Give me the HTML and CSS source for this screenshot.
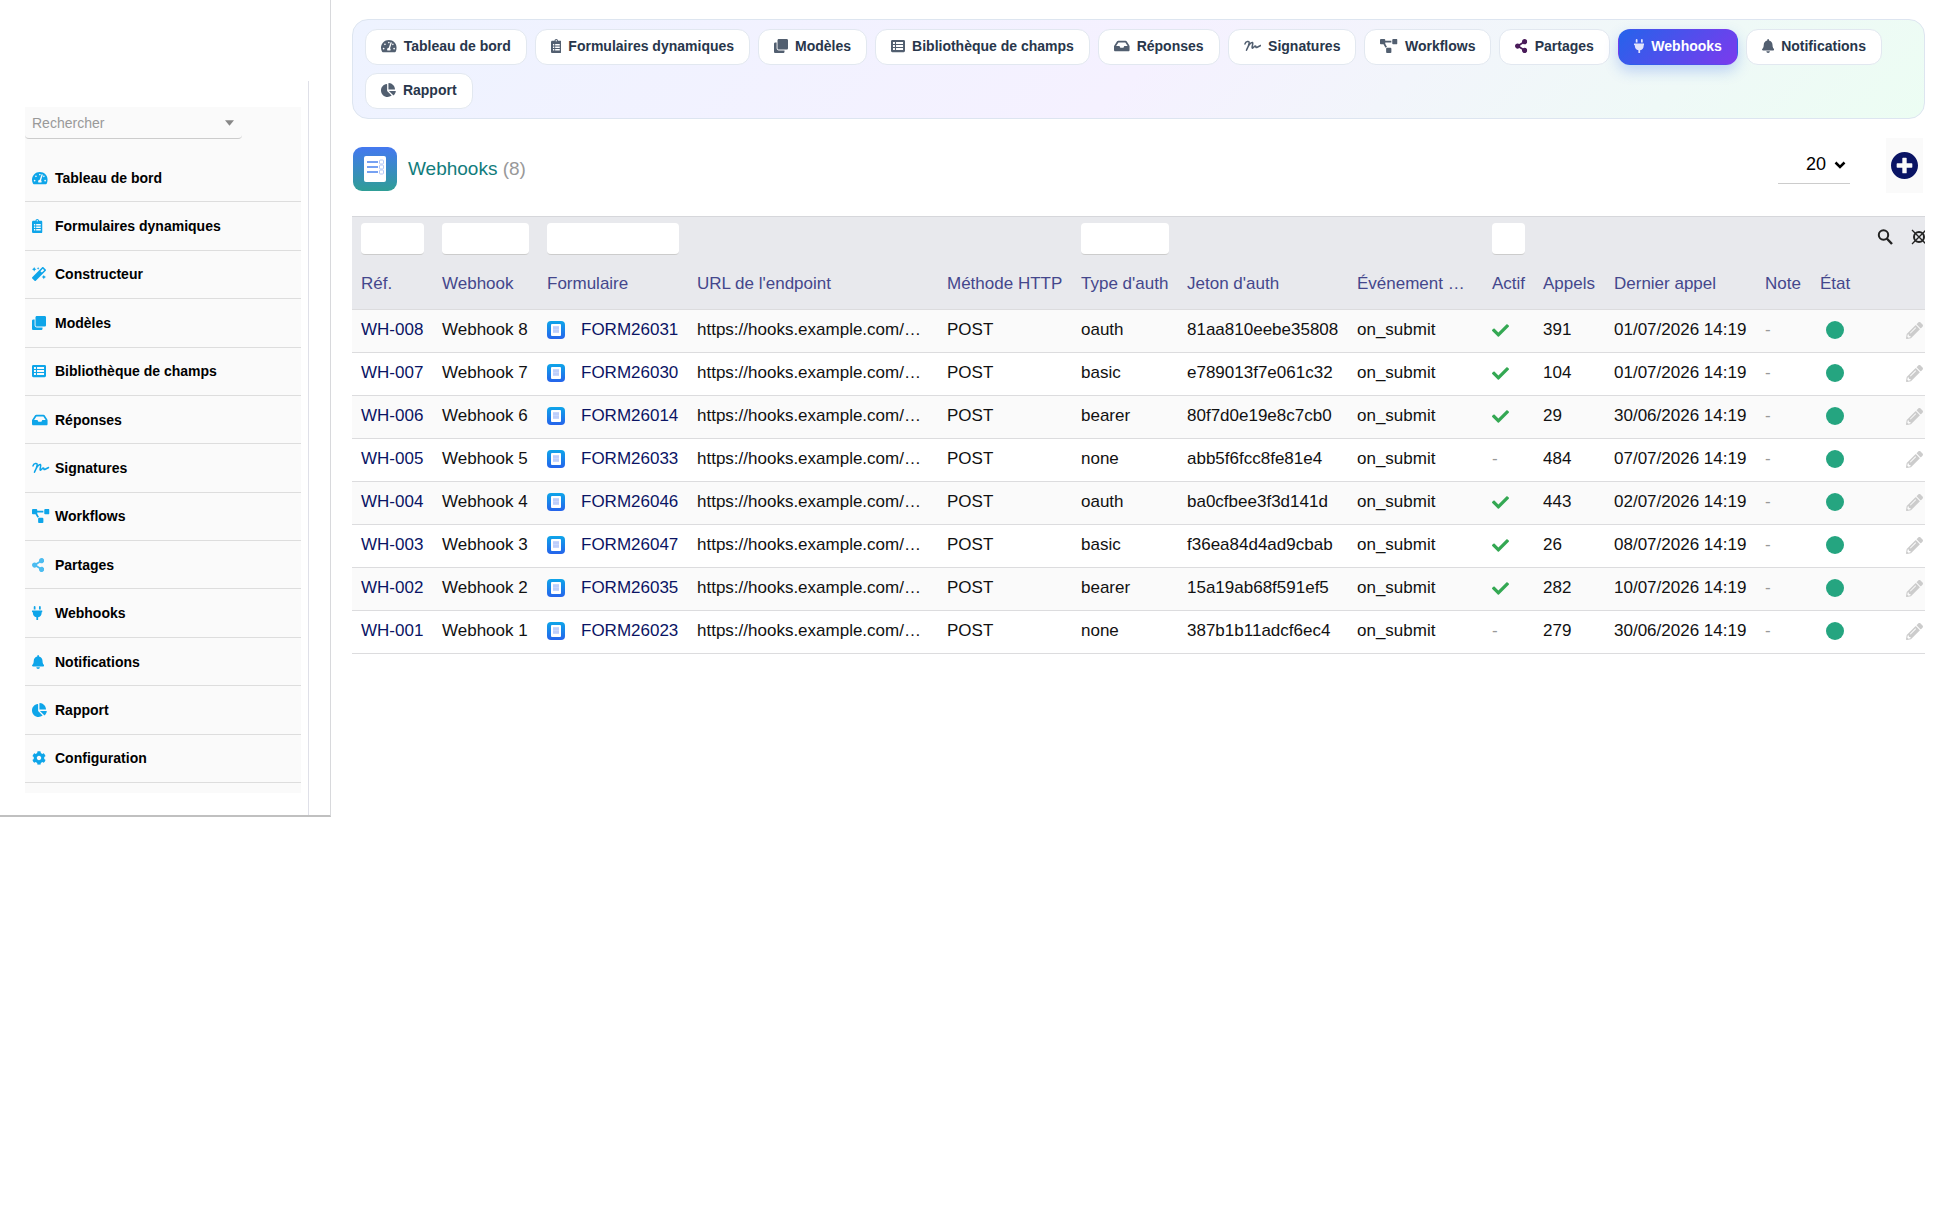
FILE: index.html
```html
<!DOCTYPE html>
<html lang="fr">
<head>
    <meta charset="UTF-8">
    <meta name="viewport" content="width=device-width, initial-scale=1.0">
    <title>Webhooks</title>
    <link rel="stylesheet" href="styles.css">
</head>
<body>
    <!-- Icones -->
    <svg class="sprite" aria-hidden="true">
        <symbol id="i-dashboard" viewBox="0 0 576 512"><path d="M288 32C128.94 32 0 160.94 0 320c0 52.8 14.25 102.26 39.06 144.8 5.61 9.62 16.3 15.2 27.44 15.2h443c11.14 0 21.83-5.58 27.44-15.2C561.75 422.26 576 372.8 576 320c0-159.06-128.94-288-288-288zm0 64c14.71 0 26.58 10.13 30.32 23.65-1.11 2.26-2.64 4.23-3.45 6.67l-9.22 27.67c-5.13 3.49-10.97 6.01-17.64 6.01-17.67 0-32-14.33-32-32S270.33 96 288 96zM96 384c-17.67 0-32-14.33-32-32s14.33-32 32-32 32 14.33 32 32-14.33 32-32 32zm48-160c-17.67 0-32-14.33-32-32s14.33-32 32-32 32 14.33 32 32-14.33 32-32 32zm246.77-72.41l-61.33 184C343.13 347.33 352 364.54 352 384c0 11.72-3.38 22.55-8.88 32H232.88c-5.5-9.45-8.88-20.28-8.88-32 0-33.94 26.5-61.43 59.9-63.59l61.34-184.01c4.17-12.56 17.73-19.45 30.36-15.17 12.57 4.19 19.35 17.79 15.17 30.36zm14.66 57.2l15.52-46.55c3.47-1.29 7.13-2.23 11.05-2.23 17.67 0 32 14.33 32 32s-14.33 32-32 32c-11.38-.01-20.89-6.28-26.57-15.22zM480 384c-17.67 0-32-14.33-32-32s14.33-32 32-32 32 14.33 32 32-14.33 32-32 32z"/></symbol>
        <symbol id="i-form" viewBox="0 0 384 512"><path fill-rule="evenodd" d="M336 64h-80c0-35.3-28.7-64-64-64s-64 28.7-64 64H48C21.5 64 0 85.5 0 112v352c0 26.5 21.5 48 48 48h288c26.5 0 48-21.5 48-48V112c0-26.5-21.5-48-48-48zM192 40a24 24 0 1 1 0 48 24 24 0 0 1 0-48zM72 184h48v52H72zM152 184h168v52H152zM72 276h48v52H72zM152 276h168v52H152zM72 368h48v52H72zM152 368h168v52H152z"/></symbol>
        <symbol id="i-magic" viewBox="0 0 512 512"><path d="M224 96l16-32 32-16-32-16-16-32-16 32-32 16 32 16 16 32zM80 160l26.66-53.33L160 80l-53.34-26.67L80 0 53.34 53.33 0 80l53.34 26.67L80 160zm352 128l-26.66 53.33L352 368l53.34 26.67L432 448l26.66-53.33L512 368l-53.34-26.67L432 288zm70.62-193.77L417.77 9.38C411.53 3.12 403.34 0 395.15 0c-8.19 0-16.38 3.12-22.63 9.38L9.38 372.52c-12.5 12.5-12.5 32.76 0 45.25l84.85 84.85c6.25 6.25 14.44 9.37 22.62 9.37 8.19 0 16.38-3.12 22.63-9.37l363.14-363.15c12.5-12.48 12.5-32.75 0-45.24zM359.45 203.46l-50.91-50.91 86.6-86.6 50.91 50.91-86.6 86.6z"/></symbol>
        <symbol id="i-clone" viewBox="0 0 512 512"><path d="M464 0c26.51 0 48 21.49 48 48v288c0 26.51-21.49 48-48 48H176c-26.51 0-48-21.49-48-48V48c0-26.51 21.49-48 48-48h288M176 416c-44.112 0-80-35.888-80-80V128H48c-26.51 0-48 21.49-48 48v288c0 26.51 21.49 48 48 48h288c26.51 0 48-21.49 48-48v-48H176z"/></symbol>
        <symbol id="i-list" viewBox="0 0 512 512"><path fill-rule="evenodd" d="M464 480H48c-26.51 0-48-21.49-48-48V80c0-26.51 21.49-48 48-48h416c26.51 0 48 21.49 48 48v352c0 26.51-21.49 48-48 48zM72 112h72v72H72zM184 112h256v72H184zM72 222h72v72H72zM184 222h256v72H184zM72 332h72v72H72zM184 332h256v72H184z"/></symbol>
        <symbol id="i-inbox" viewBox="0 0 576 512"><path d="M567.938 243.908L462.25 85.374A48.003 48.003 0 0 0 422.311 64H153.689a48 48 0 0 0-39.938 21.374L8.062 243.908A47.994 47.994 0 0 0 0 270.533V400c0 26.51 21.49 48 48 48h480c26.51 0 48-21.49 48-48V270.533a47.994 47.994 0 0 0-8.062-26.625zM162.252 128h251.497l85.333 128H376l-32 64H232l-32-64H76.918l85.334-128z"/></symbol>
        <symbol id="i-signature" viewBox="0 0 640 512"><path fill="none" stroke="currentColor" stroke-width="56" stroke-linecap="round" stroke-linejoin="round" d="M36 180C60 80 195 50 190 150C180 220 130 330 90 410C150 270 250 120 310 130C355 150 260 320 305 335C350 340 380 240 425 260C450 280 415 325 465 312L610 236"/></symbol>
        <symbol id="i-workflow" viewBox="0 0 640 512"><path d="M384 320H256c-17.67 0-32 14.33-32 32v128c0 17.67 14.33 32 32 32h128c17.67 0 32-14.33 32-32V352c0-17.67-14.33-32-32-32zM192 32c0-17.67-14.33-32-32-32H32C14.33 0 0 14.33 0 32v128c0 17.67 14.33 32 32 32h95.72l73.16 128.04C211.98 300.98 232.4 288 256 288h.28L192 175.51V128h224V64H192V32zM608 0H480c-17.67 0-32 14.33-32 32v128c0 17.67 14.33 32 32 32h128c17.67 0 32-14.33 32-32V32c0-17.67-14.33-32-32-32z"/></symbol>
        <symbol id="i-share" viewBox="0 0 448 512"><path d="M352 320c-22.608 0-43.387 7.819-59.79 20.895l-102.486-64.054a96.551 96.551 0 0 0 0-41.683l102.486-64.054C308.613 184.181 329.392 192 352 192c53.019 0 96-42.981 96-96S405.019 0 352 0s-96 42.981-96 96c0 7.158.79 14.13 2.276 20.841L155.79 180.895C139.387 167.819 118.608 160 96 160c-53.019 0-96 42.981-96 96s42.981 96 96 96c22.608 0 43.387-7.819 59.79-20.895l102.486 64.054A96.301 96.301 0 0 0 256 416c0 53.019 42.981 96 96 96s96-42.981 96-96-42.981-96-96-96z"/></symbol>
        <symbol id="i-plug" viewBox="0 0 384 512"><path d="M320 32a32 32 0 0 0-64 0v96h64zm48 128H16a16 16 0 0 0-16 16v32a16 16 0 0 0 16 16h16v32a160.07 160.07 0 0 0 128 156.8V512h64v-99.2A160.07 160.07 0 0 0 352 256v-32h16a16 16 0 0 0 16-16v-32a16 16 0 0 0-16-16zM128 32a32 32 0 0 0-64 0v96h64z"/></symbol>
        <symbol id="i-bell" viewBox="0 0 448 512"><path d="M224 512c35.32 0 63.97-28.65 63.97-64H160.03c0 35.35 28.65 64 63.97 64zm215.39-149.71c-19.32-20.76-55.47-51.99-55.47-154.29 0-77.7-54.48-139.9-127.94-155.16V32c0-17.67-14.32-32-31.98-32s-31.98 14.33-31.98 32v20.84C118.56 68.1 64.08 130.3 64.08 208c0 102.3-36.15 133.53-55.47 154.29-6 6.45-8.66 14.16-8.61 21.71.11 16.4 12.98 32 32.1 32h383.8c19.12 0 32-15.6 32.1-32 .05-7.55-2.61-15.27-8.61-21.71z"/></symbol>
        <symbol id="i-pie" viewBox="0 0 544 512"><path d="M527.79 288H290.5l158.03 158.03c6.04 6.04 15.98 6.53 22.19.68 38.7-36.46 65.32-85.61 73.13-140.86 1.34-9.46-6.51-17.85-16.06-17.85zm-15.83-64.8C503.72 103.74 408.26 8.28 288.8.04 279.68-.59 272 7.1 272 16.24V240h223.77c9.14 0 16.82-7.68 16.19-16.8zM224 288V50.71c0-9.55-8.39-17.4-17.84-16.06C86.99 51.49-4.1 155.6.14 280.37 4.5 408.51 114.83 513.59 243.03 511.98c50.4-.63 96.97-16.87 135.26-44.03 7.9-5.6 8.42-17.23 1.57-24.08L224 288z"/></symbol>
        <symbol id="i-cog" viewBox="0 0 512 512"><path d="M487.4 315.7l-42.6-24.6c4.3-23.2 4.3-47 0-70.2l42.6-24.6c4.9-2.8 7.1-8.6 5.5-14-11.1-35.6-30-67.8-54.7-94.6-3.8-4.1-10-5.1-14.8-2.3L380.8 110c-17.9-15.4-38.5-27.3-60.8-35.1V25.8c0-5.6-3.9-10.5-9.4-11.7-36.7-8.2-74.3-7.8-109.2 0-5.5 1.2-9.4 6.1-9.4 11.7V75c-22.2 7.9-42.8 19.8-60.8 35.1L88.7 85.5c-4.9-2.8-11-1.9-14.8 2.3-24.7 26.7-43.6 58.9-54.7 94.6-1.7 5.4.6 11.2 5.5 14L67.3 221c-4.3 23.2-4.3 47 0 70.2l-42.6 24.6c-4.9 2.8-7.1 8.6-5.5 14 11.1 35.6 30 67.8 54.7 94.6 3.8 4.1 10 5.1 14.8 2.3l42.6-24.6c17.9 15.4 38.5 27.3 60.8 35.1v49.2c0 5.6 3.9 10.5 9.4 11.7 36.7 8.2 74.3 7.8 109.2 0 5.5-1.2 9.4-6.1 9.4-11.7v-49.2c22.2-7.9 42.8-19.8 60.8-35.1l42.6 24.6c4.9 2.8 11 1.9 14.8-2.3 24.7-26.7 43.6-58.9 54.7-94.6 1.5-5.5-.7-11.3-5.6-14.1zM256 336c-44.1 0-80-35.9-80-80s35.9-80 80-80 80 35.9 80 80-35.9 80-80 80z"/></symbol>
        <symbol id="i-check" viewBox="0 0 512 512"><path d="M173.898 439.404l-166.4-166.4c-9.997-9.997-9.997-26.206 0-36.204l36.203-36.204c9.997-9.998 26.207-9.998 36.204 0L192 312.69 432.095 72.596c9.997-9.997 26.207-9.997 36.204 0l36.203 36.204c9.997 9.997 9.997 26.206 0 36.204l-294.4 294.401c-9.998 9.997-26.207 9.997-36.204-.001z"/></symbol>
        <symbol id="i-pencil" viewBox="0 0 512 512"><path d="M497.9 142.1l-46.1 46.1c-4.7 4.7-12.3 4.7-17 0l-111-111c-4.7-4.7-4.7-12.3 0-17l46.1-46.1c18.7-18.7 49.1-18.7 67.9 0l60.1 60.1c18.8 18.7 18.8 49.1 0 67.9zM284.2 99.8L21.6 362.4.4 483.9c-2.9 16.4 11.4 30.6 27.8 27.8l121.5-21.3 262.6-262.6c4.7-4.7 4.7-12.3 0-17l-111-111c-4.8-4.7-12.4-4.7-17.1 0zM124.1 339.9c-5.5-5.5-5.5-14.3 0-19.8l154-154c5.5-5.5 14.3-5.5 19.8 0s5.5 14.3 0 19.8l-154 154c-5.5 5.5-14.3 5.5-19.8 0zM88 424h48v36.3l-64.5 11.3-31.1-31.1L51.7 376H88v48z"/></symbol>
        <symbol id="i-plus" viewBox="8 8 496 496"><path d="M256 8C119 8 8 119 8 256s111 248 248 248 248-111 248-248S393 8 256 8zm144 276c0 6.6-5.4 12-12 12h-92v92c0 6.6-5.4 12-12 12h-56c-6.6 0-12-5.4-12-12v-92h-92c-6.6 0-12-5.4-12-12v-56c0-6.6 5.4-12 12-12h92v-92c0-6.6 5.4-12 12-12h56c6.6 0 12 5.4 12 12v92h92c6.6 0 12 5.4 12 12v56z"/></symbol>
        <symbol id="i-doc" viewBox="0 0 18 18">
            <rect width="18" height="18" rx="4" fill="url(#blue)"/>
            <rect x="4" y="3" width="10" height="12" rx="1" fill="#fff"/>
            <path d="M6 5h6v7H6z" fill="#c9d7fc"/>
            <path d="M6 7h6M6 10h6" stroke="#a5b9f7" stroke-width=".6"/>
        </symbol>
        <linearGradient id="blue" x1="0" y1="0" x2="0" y2="1"><stop offset="0" stop-color="#0ea5e9"/><stop offset="1" stop-color="#2563eb"/></linearGradient>
        <linearGradient id="teal" x1="0" y1="0" x2="0" y2="1"><stop offset="0" stop-color="#4478f0"/><stop offset="1" stop-color="#2f9e96"/></linearGradient>
    </svg>

    <div class="page">
        <aside class="sidebar">
            <div class="sidebar-inner">
                <nav class="menu" aria-label="Menu">
                    <select class="search" aria-label="Rechercher">
                        <option>Rechercher</option>
                    </select>
                    <ul>
                        <li><a href="#"><svg class="icon" viewBox="0 0 576 512"><use href="#i-dashboard"/></svg><span>Tableau de bord</span></a></li>
                        <li><a href="#"><svg class="icon" viewBox="0 0 384 512"><use href="#i-form"/></svg><span>Formulaires dynamiques</span></a></li>
                        <li><a href="#"><svg class="icon" viewBox="0 0 512 512"><use href="#i-magic"/></svg><span>Constructeur</span></a></li>
                        <li><a href="#"><svg class="icon" viewBox="0 0 512 512"><use href="#i-clone"/></svg><span>Modèles</span></a></li>
                        <li><a href="#"><svg class="icon" viewBox="0 0 512 512"><use href="#i-list"/></svg><span>Bibliothèque de champs</span></a></li>
                        <li><a href="#"><svg class="icon" viewBox="0 0 576 512"><use href="#i-inbox"/></svg><span>Réponses</span></a></li>
                        <li><a href="#"><svg class="icon" viewBox="0 0 640 512"><use href="#i-signature"/></svg><span>Signatures</span></a></li>
                        <li><a href="#"><svg class="icon" viewBox="0 0 640 512"><use href="#i-workflow"/></svg><span>Workflows</span></a></li>
                        <li><a href="#"><svg class="icon light" viewBox="0 0 448 512"><use href="#i-share"/></svg><span>Partages</span></a></li>
                        <li><a href="#"><svg class="icon" viewBox="0 0 384 512"><use href="#i-plug"/></svg><span>Webhooks</span></a></li>
                        <li><a href="#"><svg class="icon" viewBox="0 0 448 512"><use href="#i-bell"/></svg><span>Notifications</span></a></li>
                        <li><a href="#"><svg class="icon" viewBox="0 0 544 512"><use href="#i-pie"/></svg><span>Rapport</span></a></li>
                        <li><a href="#"><svg class="icon" viewBox="0 0 512 512"><use href="#i-cog"/></svg><span>Configuration</span></a></li>
                    </ul>
                </nav>
            </div>
        </aside>

        <main class="content">
            <nav class="tabs" aria-label="Modules">
                <a class="tab" href="#"><svg class="icon" viewBox="0 0 576 512"><use href="#i-dashboard"/></svg>Tableau de bord</a>
                <a class="tab" href="#"><svg class="icon" viewBox="0 0 384 512"><use href="#i-form"/></svg>Formulaires dynamiques</a>
                <a class="tab" href="#"><svg class="icon" viewBox="0 0 512 512"><use href="#i-clone"/></svg>Modèles</a>
                <a class="tab" href="#"><svg class="icon" viewBox="0 0 512 512"><use href="#i-list"/></svg>Bibliothèque de champs</a>
                <a class="tab" href="#"><svg class="icon" viewBox="0 0 576 512"><use href="#i-inbox"/></svg>Réponses</a>
                <a class="tab" href="#"><svg class="icon" viewBox="0 0 640 512"><use href="#i-signature"/></svg>Signatures</a>
                <a class="tab" href="#"><svg class="icon" viewBox="0 0 640 512"><use href="#i-workflow"/></svg>Workflows</a>
                <a class="tab share" href="#"><svg class="icon" viewBox="0 0 448 512"><use href="#i-share"/></svg>Partages</a>
                <a class="tab active" href="#"><svg class="icon" viewBox="0 0 384 512"><use href="#i-plug"/></svg>Webhooks</a>
                <a class="tab" href="#"><svg class="icon" viewBox="0 0 448 512"><use href="#i-bell"/></svg>Notifications</a>
                <a class="tab" href="#"><svg class="icon" viewBox="0 0 544 512"><use href="#i-pie"/></svg>Rapport</a>
            </nav>

            <div class="title-bar">
                <div class="title">
                    <svg class="title-icon" viewBox="0 0 44 44" aria-hidden="true">
                        <rect width="44" height="44" rx="9" fill="url(#teal)"/>
                        <rect x="11" y="9" width="22" height="26" rx="2" fill="#fff"/>
                        <path d="M14 15h11M14 20h11M14 25h11" stroke="#4a83ee" stroke-width="1.5"/>
                        <g fill="none" stroke="#b4c8f8" stroke-width="1"><rect x="26.5" y="13" width="4" height="4" rx="1"/><rect x="26.5" y="18" width="4" height="4" rx="1"/><rect x="26.5" y="23" width="4" height="4" rx="1"/></g>
                    </svg>
                    <h1>Webhooks <span>(8)</span></h1>
                </div>
                <select class="limit" aria-label="Nombre de lignes">
                    <option>20</option>
                </select>
                <a class="add" href="#" aria-label="Nouveau webhook"><svg viewBox="0 0 496 496"><use href="#i-plus"/></svg></a>
            </div>

            <table class="list">
                <colgroup>
                    <col class="c-ref"><col class="c-name"><col class="c-form"><col><col class="c-method">
                    <col class="c-type"><col class="c-token"><col class="c-event"><col class="c-active"><col class="c-calls">
                    <col class="c-date"><col class="c-note"><col class="c-state"><col class="c-actions">
                </colgroup>
                <thead>
                    <tr class="filters">
                        <td><input type="text" aria-label="Filtrer par réf."></td>
                        <td><input type="text" aria-label="Filtrer par webhook"></td>
                        <td><input type="text" aria-label="Filtrer par formulaire"></td>
                        <td></td>
                        <td></td>
                        <td><input type="text" aria-label="Filtrer par type d'auth"></td>
                        <td></td>
                        <td></td>
                        <td><input type="text" aria-label="Filtrer par actif"></td>
                        <td></td>
                        <td></td>
                        <td></td>
                        <td></td>
                        <td class="tools">
                            <div>
                                <button type="button" aria-label="Rechercher"><svg viewBox="0 0 16 16"><circle cx="6.5" cy="6" r="4.7" fill="none" stroke="#222" stroke-width="2"/><path d="M9.8 9.5L15 15" stroke="#222" stroke-width="2.4"/></svg></button>
                                <button type="button" aria-label="Effacer les filtres"><svg viewBox="0 0 16 16"><circle cx="8" cy="8" r="5" fill="none" stroke="#222" stroke-width="2"/><path d="M1 1l14 14M15 1L1 15" stroke="#222" stroke-width="1.3"/></svg></button>
                            </div>
                        </td>
                    </tr>
                    <tr class="titles">
                        <th>Réf.</th>
                        <th>Webhook</th>
                        <th>Formulaire</th>
                        <th>URL de l'endpoint</th>
                        <th>Méthode HTTP</th>
                        <th>Type d'auth</th>
                        <th>Jeton d'auth</th>
                        <th>Événement …</th>
                        <th>Actif</th>
                        <th>Appels</th>
                        <th>Dernier appel</th>
                        <th>Note</th>
                        <th class="state">État</th>
                        <th></th>
                    </tr>
                </thead>
                <tbody>
                    <tr>
                        <td><a href="#">WH-008</a></td><td>Webhook 8</td>
                        <td><a class="form" href="#"><svg viewBox="0 0 18 18"><use href="#i-doc"/></svg>FORM26031</a></td>
                        <td>https://hooks.example.com/…</td><td>POST</td><td>oauth</td><td>81aa810eebe35808</td><td>on_submit</td>
                        <td><svg class="check" viewBox="0 0 512 512"><use href="#i-check"/></svg></td>
                        <td>391</td><td>01/07/2026 14:19</td><td class="muted">-</td>
                        <td class="state"><span class="dot"></span></td>
                        <td class="edit"><a href="#" aria-label="Modifier"><svg viewBox="0 0 512 512"><use href="#i-pencil"/></svg></a></td>
                    </tr>
                    <tr>
                        <td><a href="#">WH-007</a></td><td>Webhook 7</td>
                        <td><a class="form" href="#"><svg viewBox="0 0 18 18"><use href="#i-doc"/></svg>FORM26030</a></td>
                        <td>https://hooks.example.com/…</td><td>POST</td><td>basic</td><td>e789013f7e061c32</td><td>on_submit</td>
                        <td><svg class="check" viewBox="0 0 512 512"><use href="#i-check"/></svg></td>
                        <td>104</td><td>01/07/2026 14:19</td><td class="muted">-</td>
                        <td class="state"><span class="dot"></span></td>
                        <td class="edit"><a href="#" aria-label="Modifier"><svg viewBox="0 0 512 512"><use href="#i-pencil"/></svg></a></td>
                    </tr>
                    <tr>
                        <td><a href="#">WH-006</a></td><td>Webhook 6</td>
                        <td><a class="form" href="#"><svg viewBox="0 0 18 18"><use href="#i-doc"/></svg>FORM26014</a></td>
                        <td>https://hooks.example.com/…</td><td>POST</td><td>bearer</td><td>80f7d0e19e8c7cb0</td><td>on_submit</td>
                        <td><svg class="check" viewBox="0 0 512 512"><use href="#i-check"/></svg></td>
                        <td>29</td><td>30/06/2026 14:19</td><td class="muted">-</td>
                        <td class="state"><span class="dot"></span></td>
                        <td class="edit"><a href="#" aria-label="Modifier"><svg viewBox="0 0 512 512"><use href="#i-pencil"/></svg></a></td>
                    </tr>
                    <tr>
                        <td><a href="#">WH-005</a></td><td>Webhook 5</td>
                        <td><a class="form" href="#"><svg viewBox="0 0 18 18"><use href="#i-doc"/></svg>FORM26033</a></td>
                        <td>https://hooks.example.com/…</td><td>POST</td><td>none</td><td>abb5f6fcc8fe81e4</td><td>on_submit</td>
                        <td class="muted">-</td>
                        <td>484</td><td>07/07/2026 14:19</td><td class="muted">-</td>
                        <td class="state"><span class="dot"></span></td>
                        <td class="edit"><a href="#" aria-label="Modifier"><svg viewBox="0 0 512 512"><use href="#i-pencil"/></svg></a></td>
                    </tr>
                    <tr>
                        <td><a href="#">WH-004</a></td><td>Webhook 4</td>
                        <td><a class="form" href="#"><svg viewBox="0 0 18 18"><use href="#i-doc"/></svg>FORM26046</a></td>
                        <td>https://hooks.example.com/…</td><td>POST</td><td>oauth</td><td>ba0cfbee3f3d141d</td><td>on_submit</td>
                        <td><svg class="check" viewBox="0 0 512 512"><use href="#i-check"/></svg></td>
                        <td>443</td><td>02/07/2026 14:19</td><td class="muted">-</td>
                        <td class="state"><span class="dot"></span></td>
                        <td class="edit"><a href="#" aria-label="Modifier"><svg viewBox="0 0 512 512"><use href="#i-pencil"/></svg></a></td>
                    </tr>
                    <tr>
                        <td><a href="#">WH-003</a></td><td>Webhook 3</td>
                        <td><a class="form" href="#"><svg viewBox="0 0 18 18"><use href="#i-doc"/></svg>FORM26047</a></td>
                        <td>https://hooks.example.com/…</td><td>POST</td><td>basic</td><td>f36ea84d4ad9cbab</td><td>on_submit</td>
                        <td><svg class="check" viewBox="0 0 512 512"><use href="#i-check"/></svg></td>
                        <td>26</td><td>08/07/2026 14:19</td><td class="muted">-</td>
                        <td class="state"><span class="dot"></span></td>
                        <td class="edit"><a href="#" aria-label="Modifier"><svg viewBox="0 0 512 512"><use href="#i-pencil"/></svg></a></td>
                    </tr>
                    <tr>
                        <td><a href="#">WH-002</a></td><td>Webhook 2</td>
                        <td><a class="form" href="#"><svg viewBox="0 0 18 18"><use href="#i-doc"/></svg>FORM26035</a></td>
                        <td>https://hooks.example.com/…</td><td>POST</td><td>bearer</td><td>15a19ab68f591ef5</td><td>on_submit</td>
                        <td><svg class="check" viewBox="0 0 512 512"><use href="#i-check"/></svg></td>
                        <td>282</td><td>10/07/2026 14:19</td><td class="muted">-</td>
                        <td class="state"><span class="dot"></span></td>
                        <td class="edit"><a href="#" aria-label="Modifier"><svg viewBox="0 0 512 512"><use href="#i-pencil"/></svg></a></td>
                    </tr>
                    <tr>
                        <td><a href="#">WH-001</a></td><td>Webhook 1</td>
                        <td><a class="form" href="#"><svg viewBox="0 0 18 18"><use href="#i-doc"/></svg>FORM26023</a></td>
                        <td>https://hooks.example.com/…</td><td>POST</td><td>none</td><td>387b1b11adcf6ec4</td><td>on_submit</td>
                        <td class="muted">-</td>
                        <td>279</td><td>30/06/2026 14:19</td><td class="muted">-</td>
                        <td class="state"><span class="dot"></span></td>
                        <td class="edit"><a href="#" aria-label="Modifier"><svg viewBox="0 0 512 512"><use href="#i-pencil"/></svg></a></td>
                    </tr>
                </tbody>
            </table>
        </main>
    </div>
</body>
</html>
```
FILE: styles.css
```css
* {
    box-sizing: border-box;
}
body {
    margin: 0;
    background-color: #fff;
    color: #111;
    font-family: "Liberation Sans", Arial, sans-serif;
    font-size: 17px;
}
a {
    color: #0a1464;
    text-decoration: none;
}
svg {
    display: block;
    fill: currentColor;
}
.sprite {
    position: absolute;
    width: 0;
    height: 0;
}
.icon {
    height: 14px;
    flex: none;
}
.page {
    display: flex;
    align-items: flex-start;
}

/* Menu de gauche */
.sidebar {
    flex: none;
    width: 331px;
    padding-top: 81px;
    border-right: 1px solid #d8d9dc;
    border-bottom: 2px solid #c0c0c0;
}
.sidebar-inner {
    width: 309px;
    padding: 26px 7px 22px 25px;
    border-right: 1px solid #dfe0e8;
}
.menu {
    background-color: #fafafa;
    padding-bottom: 10px;
}
.search {
    display: block;
    width: 217px;
    height: 32px;
    margin-bottom: 15px;
    padding: 0 7px;
    appearance: none;
    border: none;
    border-bottom: 1px solid #ccc;
    border-radius: 4px;
    background: url("data:image/svg+xml,%3Csvg xmlns='http://www.w3.org/2000/svg' viewBox='0 0 10 6'%3E%3Cpath d='M0 0h10L5 6z' fill='%23888'/%3E%3C/svg%3E") no-repeat right 8px center / 9px 6px;
    color: #999;
    font: 14px "Liberation Sans", Arial, sans-serif;
}
.menu ul {
    display: grid;
    grid-auto-rows: 1fr;
    min-height: 629px;
    margin: 0;
    padding: 0;
    list-style: none;
}
.menu li {
    border-bottom: 1px solid #ddd;
}
.menu a {
    display: grid;
    grid-template-columns: 23px 1fr;
    align-items: center;
    height: 100%;
    padding-left: 7px;
    color: #000;
    font-size: 14px;
    font-weight: bold;
}
.menu .icon {
    color: #0ea5e9;
}
.menu .light {
    color: #4cbcf0;
}

/* Onglets */
.content {
    flex: 1;
    min-width: 0;
    padding: 19px 21px 0;
}
.tabs {
    display: flex;
    flex-wrap: wrap;
    gap: 8px;
    padding: 9px 12px;
    border: 1px solid #dde5f0;
    border-radius: 16px;
    background: linear-gradient(135deg, #eef3ff 0%, #f5f1ff 50%, #ecfdf3 100%);
}
.tab {
    display: flex;
    align-items: center;
    gap: 7px;
    height: 36px;
    padding: 0 15px 2px;
    border: 1px solid #e2e8f0;
    border-radius: 12px;
    background-color: #fff;
    color: #28364b;
    font-size: 14px;
    font-weight: bold;
}
.tab .icon {
    color: #525f70;
}
.share .icon {
    color: #4a1c5a;
}
.tab.active {
    border-color: transparent;
    background: linear-gradient(135deg, #2563eb, #7c3aed);
    box-shadow: 0 6px 14px rgba(37, 99, 235, 0.25);
    color: #fff;
}
.active .icon {
    color: #e2e4fc;
}

/* Titre */
.title-bar {
    display: flex;
    align-items: center;
    margin: 19px 2px 23px 1px;
}
.title {
    display: flex;
    flex: 1;
    align-items: center;
    gap: 11px;
    padding-top: 7px;
}
.title-icon {
    width: 44px;
    height: 44px;
}
h1 {
    margin: 0;
    color: #127c7c;
    font-size: 19px;
    font-weight: normal;
}
h1 span {
    color: #999;
}
.limit {
    width: 72px;
    height: 36px;
    margin-right: 36px;
    padding: 0 4px 2px 28px;
    appearance: none;
    border: none;
    border-bottom: 1px solid #ccc;
    border-radius: 0;
    background: url("data:image/svg+xml,%3Csvg xmlns='http://www.w3.org/2000/svg' viewBox='0 0 12 8'%3E%3Cpath d='M1.5 1.5L6 6l4.5-4.5' fill='none' stroke='%23000' stroke-width='2.5'/%3E%3C/svg%3E") no-repeat right 4px center / 12px 8px;
    color: #000;
    font: 18px "Liberation Sans", Arial, sans-serif;
}
.add {
    padding: 14px 5px;
    background-color: #fafafa;
}
.add svg {
    width: 27px;
    height: 27px;
}

/* Liste */
.list {
    width: 100%;
    table-layout: fixed;
    border-collapse: collapse;
    border-top: 1px solid #d6d7db;
}
.c-ref { width: 81px; }
.c-name { width: 105px; }
.c-form { width: 150px; }
.c-method { width: 134px; }
.c-type { width: 106px; }
.c-token { width: 170px; }
.c-event { width: 135px; }
.c-active { width: 51px; }
.c-calls { width: 71px; }
.c-date { width: 151px; }
.c-note { width: 55px; }
.c-state { width: 48px; }
.c-actions { width: 66px; }

.list td,
.list th {
    height: 43px;
    padding: 0 9px 2px;
    overflow: hidden;
    text-align: left;
    white-space: nowrap;
}
.list thead {
    background-color: #e8e9ed;
}
.list .filters td {
    height: 42px;
    padding-top: 6px;
    vertical-align: top;
}
.list .titles th {
    height: 51px;
    padding-bottom: 0;
    color: #44478c;
    font-weight: normal;
}
.list .titles,
.list tbody tr {
    border-bottom: 1px solid #dcdcde;
}
.list tbody tr:nth-child(odd) {
    background-color: #fafafa;
}
.filters input {
    display: block;
    width: 100%;
    height: 32px;
    border: none;
    border-bottom: 1px solid #ccc;
    border-radius: 4px;
    background-color: #fff;
}
.list .filters .tools {
    padding: 12px 0 0 18px;
}
.tools div {
    display: flex;
    gap: 18px;
}
.tools button {
    flex: none;
    padding: 0;
    border: none;
    background: none;
    cursor: pointer;
}
.tools svg {
    width: 16px;
    height: 16px;
}
.form {
    display: flex;
    align-items: center;
    gap: 16px;
}
.form svg {
    width: 18px;
    height: 18px;
}
.check {
    width: 17px;
    height: 17px;
    color: #34a853;
}
.list .muted {
    color: #999;
}
.list .state {
    text-align: center;
}
.dot {
    display: block;
    width: 18px;
    height: 18px;
    margin: auto;
    border-radius: 50%;
    background-color: #25a580;
}
.list .edit {
    padding-right: 2px;
}
.edit svg {
    width: 17px;
    height: 17px;
    margin-left: auto;
    color: #ccc;
}
```
